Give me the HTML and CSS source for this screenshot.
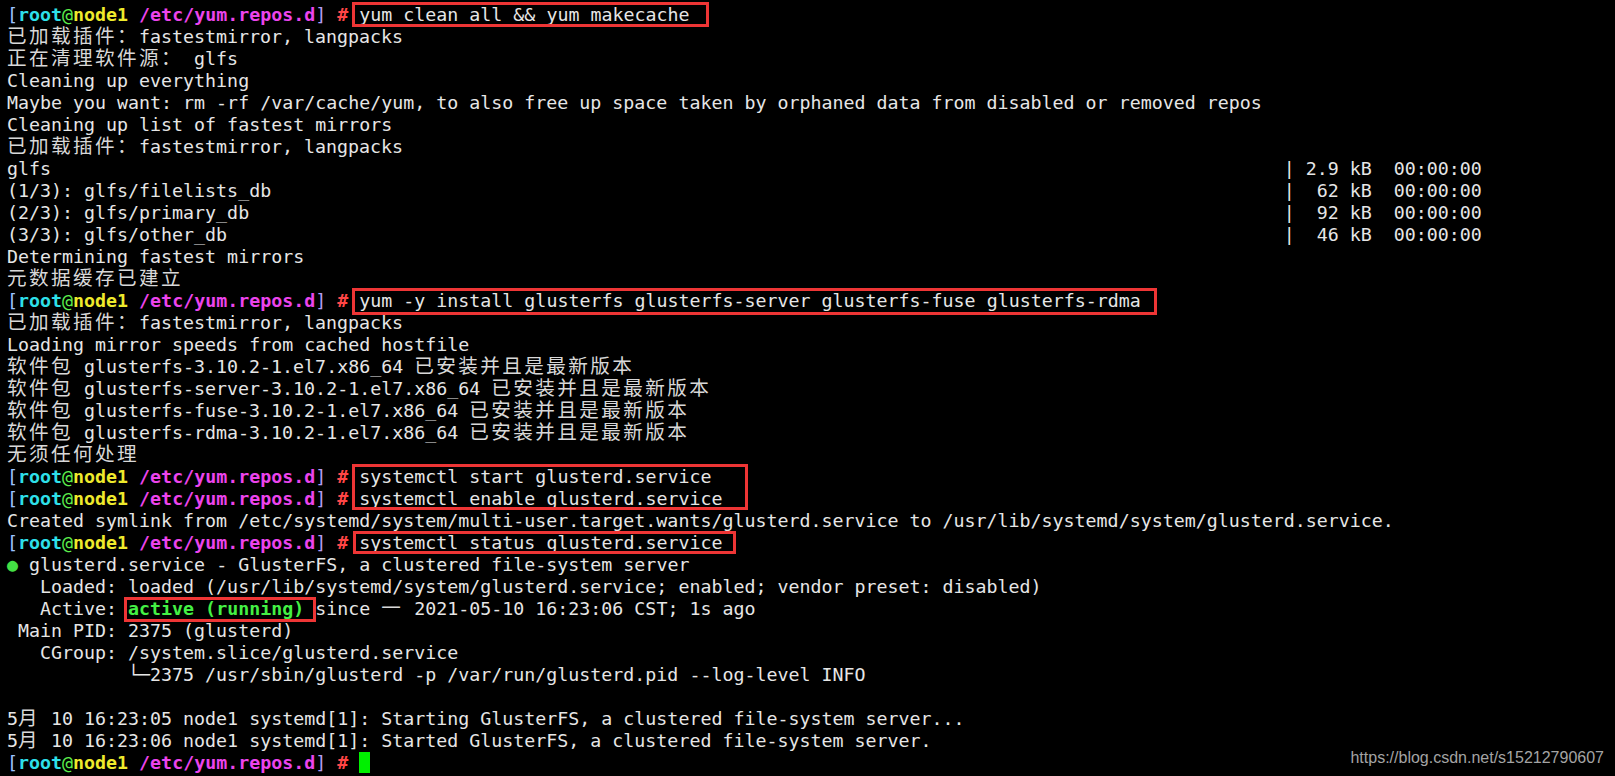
FILE: index.html
```html
<!DOCTYPE html>
<html lang="zh">
<head>
<meta charset="utf-8">
<title>glusterfs install</title>
<link rel="stylesheet" href="styles.css">
</head>
<body>
<div class="screen">
  <div class="term">
    <div class="ln"><span class="pb1">[</span><span class="pu">root</span><span class="pa">@</span><span class="ph">node1</span> <span class="pp">/etc/yum.repos.d</span><span class="pb2">]</span> <span class="px">#</span> yum clean all &amp;&amp; yum makecache</div>
    <div class="ln"><span class="cjk">已加载插件：</span>fastestmirror, langpacks</div>
    <div class="ln"><span class="cjk">正在清理软件源：</span> glfs</div>
    <div class="ln">Cleaning up everything</div>
    <div class="ln">Maybe you want: rm -rf /var/cache/yum, to also free up space taken by orphaned data from disabled or removed repos</div>
    <div class="ln">Cleaning up list of fastest mirrors</div>
    <div class="ln"><span class="cjk">已加载插件：</span>fastestmirror, langpacks</div>
    <div class="ln"><span class="col">glfs</span>| 2.9 kB  00:00:00</div>
    <div class="ln"><span class="col">(1/3): glfs/filelists_db</span>|  62 kB  00:00:00</div>
    <div class="ln"><span class="col">(2/3): glfs/primary_db</span>|  92 kB  00:00:00</div>
    <div class="ln"><span class="col">(3/3): glfs/other_db</span>|  46 kB  00:00:00</div>
    <div class="ln">Determining fastest mirrors</div>
    <div class="ln"><span class="cjk">元数据缓存已建立</span></div>
    <div class="ln"><span class="pb1">[</span><span class="pu">root</span><span class="pa">@</span><span class="ph">node1</span> <span class="pp">/etc/yum.repos.d</span><span class="pb2">]</span> <span class="px">#</span> yum -y install glusterfs glusterfs-server glusterfs-fuse glusterfs-rdma</div>
    <div class="ln"><span class="cjk">已加载插件：</span>fastestmirror, langpacks</div>
    <div class="ln">Loading mirror speeds from cached hostfile</div>
    <div class="ln"><span class="cjk">软件包</span> glusterfs-3.10.2-1.el7.x86_64 <span class="cjk">已安装并且是最新版本</span></div>
    <div class="ln"><span class="cjk">软件包</span> glusterfs-server-3.10.2-1.el7.x86_64 <span class="cjk">已安装并且是最新版本</span></div>
    <div class="ln"><span class="cjk">软件包</span> glusterfs-fuse-3.10.2-1.el7.x86_64 <span class="cjk">已安装并且是最新版本</span></div>
    <div class="ln"><span class="cjk">软件包</span> glusterfs-rdma-3.10.2-1.el7.x86_64 <span class="cjk">已安装并且是最新版本</span></div>
    <div class="ln"><span class="cjk">无须任何处理</span></div>
    <div class="ln"><span class="pb1">[</span><span class="pu">root</span><span class="pa">@</span><span class="ph">node1</span> <span class="pp">/etc/yum.repos.d</span><span class="pb2">]</span> <span class="px">#</span> systemctl start glusterd.service</div>
    <div class="ln"><span class="pb1">[</span><span class="pu">root</span><span class="pa">@</span><span class="ph">node1</span> <span class="pp">/etc/yum.repos.d</span><span class="pb2">]</span> <span class="px">#</span> systemctl enable glusterd.service</div>
    <div class="ln">Created symlink from /etc/systemd/system/multi-user.target.wants/glusterd.service to /usr/lib/systemd/system/glusterd.service.</div>
    <div class="ln"><span class="pb1">[</span><span class="pu">root</span><span class="pa">@</span><span class="ph">node1</span> <span class="pp">/etc/yum.repos.d</span><span class="pb2">]</span> <span class="px">#</span> systemctl status glusterd.service</div>
    <div class="ln"><span class="dot">●</span> glusterd.service - GlusterFS, a clustered file-system server</div>
    <div class="ln">   Loaded: loaded (/usr/lib/systemd/system/glusterd.service; enabled; vendor preset: disabled)</div>
    <div class="ln">   Active: <span class="ok">active (running)</span> since <span class="cjk">一</span> 2021-05-10 16:23:06 CST; 1s ago</div>
    <div class="ln"> Main PID: 2375 (glusterd)</div>
    <div class="ln">   CGroup: /system.slice/glusterd.service</div>
    <div class="ln">           └─2375 /usr/sbin/glusterd -p /var/run/glusterd.pid --log-level INFO</div>
    <div class="ln"> </div>
    <div class="ln">5<span class="cjk">月</span> 10 16:23:05 node1 systemd[1]: Starting GlusterFS, a clustered file-system server...</div>
    <div class="ln">5<span class="cjk">月</span> 10 16:23:06 node1 systemd[1]: Started GlusterFS, a clustered file-system server.</div>
    <div class="ln"><span class="pb1">[</span><span class="pu">root</span><span class="pa">@</span><span class="ph">node1</span> <span class="pp">/etc/yum.repos.d</span><span class="pb2">]</span> <span class="px">#</span> <span class="cursor"> </span></div>
  </div>

  <div class="box b1"></div>
  <div class="box b2"></div>
  <div class="box b3"></div>
  <div class="box b4"></div>
  <div class="box b5"></div>

  <span class="wm">https://blog.csdn.net/s15212790607</span>
</div>
</body>
</html>
```

FILE: styles.css
```css
html, body {
  margin: 0;
  padding: 0;
  background: #000;
}

.screen {
  position: relative;
  width: 1615px;
  height: 776px;
  overflow: hidden;
  background: #000;
}

.term {
  padding: 3.5px 0 0 7px;
  font-family: "DejaVu Sans Mono", "Noto Sans CJK SC", monospace;
  font-size: 18.3px;
  line-height: 22px;
  color: #e6e6e6;
}

.ln {
  height: 22px;
  white-space: pre;
}

.cjk {
  font-size: 19.6px;
  letter-spacing: 2.4px;
  color: #d8d8d8;
}

.col {
  display: inline-block;
  width: 116ch;
}

/* prompt colours */
.pb1 { color: #9cc4ff; }
.pu  { color: #2ee0ea; font-weight: bold; }
.pa  { color: #5cee4c; }
.ph  { color: #eeea2c; font-weight: bold; }
.pp  { color: #ec44ec; font-weight: bold; }
.pb2 { color: #b49cf4; }
.px  { color: #ff4646; font-weight: bold; }

.dot { color: #44e044; }

.ok {
  color: #44f044;
  font-weight: bold;
}

.cursor {
  background: #00f000;
}

/* red annotation rectangles drawn over the terminal */
.box {
  position: absolute;
  box-sizing: border-box;
  border: 3px solid #ee3535;
}

.b1 { left: 352px; top: 2px;   width: 357px; height: 25px; }
.b2 { left: 352px; top: 288px; width: 805px; height: 27px; }
.b3 { left: 352px; top: 464px; width: 396px; height: 46px; }
.b4 { left: 353px; top: 531px; width: 383px; height: 23px; }
.b5 { left: 124px; top: 597px; width: 192px; height: 25px; }

.wm {
  position: absolute;
  right: 11px;
  bottom: 9px;
  font-family: "Liberation Sans", Arial, sans-serif;
  font-size: 16px;
  color: #a4a4a4;
}
```
